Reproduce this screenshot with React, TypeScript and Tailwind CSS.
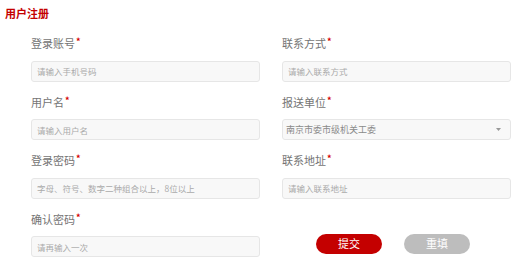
import React from 'react';

const font = { fontFamily: '"Noto Sans CJK SC", "Noto Sans", sans-serif' };

type Field = { label: string; placeholder?: string; select?: string };

const left: Field[] = [
  { label: '登录账号', placeholder: '请输入手机号码' },
  { label: '用户名', placeholder: '请输入用户名' },
  { label: '登录密码', placeholder: '字母、符号、数字二种组合以上，8位以上' },
  { label: '确认密码', placeholder: '请再输入一次' },
];

const right: Field[] = [
  { label: '联系方式', placeholder: '请输入联系方式' },
  { label: '报送单位', select: '南京市委市级机关工委' },
  { label: '联系地址', placeholder: '请输入联系地址' },
];

function Label({ text }: { text: string }) {
  return (
    <div className="h-[37.5px] pt-[13px] text-[11px] leading-[14px] text-[#747474]">
      {text}
      <span className="relative -top-[3px] ml-[1px] text-[9px] font-bold text-[#d40000]">*</span>
    </div>
  );
}

function FieldBox({ field }: { field: Field }) {
  return (
    <div>
      <Label text={field.label} />
      {field.select ? (
        <div className="flex h-[21px] items-center justify-between rounded-[3px] border border-[#e6e6e6] bg-[#f8f8f8] pl-[3px] pr-[9px] text-[9px] text-[#8a8a8a]">
          <span>{field.select}</span>
          <svg width="5" height="3" viewBox="0 0 5 3">
            <path d="M0 0 L5 0 L2.5 3 Z" fill="#999" />
          </svg>
        </div>
      ) : (
        <input
          className="block h-[21px] w-full rounded-[3px] border border-[#e6e6e6] bg-[#f8f8f8] pl-[5px] text-[8.5px] outline-none placeholder:text-[#aaa]"
          placeholder={field.placeholder}
        />
      )}
    </div>
  );
}

export default function App() {
  return (
    <div className="h-[276px] w-[514px] bg-white" style={font}>
      <div className="h-[23px] pl-[5px] pt-[7px] text-[11px] font-bold leading-[12px] text-[#c40000]">用户注册</div>
      <div className="grid grid-cols-[229px_229px] gap-x-[22px] pl-[31px]">
        <div className="flex flex-col">
          {left.map((f) => (
            <FieldBox key={f.label} field={f} />
          ))}
        </div>
        <div className="flex flex-col">
          {right.map((f) => (
            <FieldBox key={f.label} field={f} />
          ))}
          <div className="flex gap-[22px] pl-[34px] pt-[35px]">
            <button className="h-[20px] w-[66px] rounded-full bg-[#c40000] text-[11px] text-white">提交</button>
            <button className="h-[20px] w-[66px] rounded-full bg-[#bdbdbd] text-[11px] text-white">重填</button>
          </div>
        </div>
      </div>
    </div>
  );
}
